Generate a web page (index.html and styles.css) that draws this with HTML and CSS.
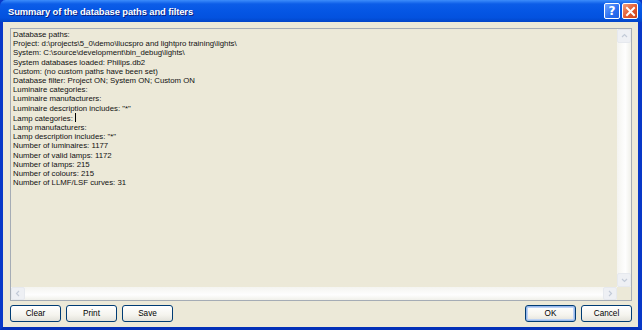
FILE: index.html
```html
<!DOCTYPE html>
<html lang="en">
<head>
    <meta charset="UTF-8">
    <title>Summary of the database paths and filters</title>
    <link rel="stylesheet" href="styles.css">
</head>
<body>
    <div class="window">
        <div class="titlebar">
            <span class="title">Summary of the database paths and filters</span>
            <div class="title-buttons">
                <span class="tb-btn help">?</span>
                <span class="tb-btn close">
                    <svg width="11" height="11" viewBox="0 0 11 11"><path d="M2 2 L9 9 M9 2 L2 9" stroke="#fff" stroke-width="2" stroke-linecap="square"/></svg>
                </span>
            </div>
        </div>
        <div class="client">
            <div class="log">
                <div class="log-main">
                    <div class="log-text">
                        <div>Database paths:</div>
                        <div>Project: d:\projects\5_0\demo\llucspro and lightpro training\lights\</div>
                        <div>System: C:\source\development\bin_debug\lights\</div>
                        <div>System databases loaded: Philips.db2</div>
                        <div>Custom: (no custom paths have been set)</div>
                        <div>Database filter: Project ON; System ON; Custom ON</div>
                        <div>Luminaire categories:</div>
                        <div>Luminaire manufacturers:</div>
                        <div>Luminaire description includes: "*"</div>
                        <div>Lamp categories: <span class="caret"></span></div>
                        <div>Lamp manufacturers:</div>
                        <div>Lamp description includes: "*"</div>
                        <div>Number of luminaires: 1177</div>
                        <div>Number of valid lamps: 1172</div>
                        <div>Number of lamps: 215</div>
                        <div>Number of colours: 215</div>
                        <div>Number of LLMF/LSF curves: 31</div>
                    </div>
                    <div class="hscroll">
                        <span class="arrow">
                            <svg width="6" height="7" viewBox="0 0 6 7"><path d="M4 1 L1.5 3.5 L4 6" fill="none" stroke="#c3cbd8" stroke-width="1.2"/></svg>
                        </span>
                        <span class="track"></span>
                        <span class="arrow">
                            <svg width="6" height="7" viewBox="0 0 6 7"><path d="M2 1 L4.5 3.5 L2 6" fill="none" stroke="#c3cbd8" stroke-width="1.2"/></svg>
                        </span>
                    </div>
                </div>
                <div class="vscroll">
                    <span class="arrow">
                        <svg width="7" height="6" viewBox="0 0 7 6"><path d="M1 4 L3.5 1.5 L6 4" fill="none" stroke="#c3cbd8" stroke-width="1.2"/></svg>
                    </span>
                    <span class="track"></span>
                    <span class="arrow">
                        <svg width="7" height="6" viewBox="0 0 7 6"><path d="M1 2 L3.5 4.5 L6 2" fill="none" stroke="#c3cbd8" stroke-width="1.2"/></svg>
                    </span>
                    <span class="corner"></span>
                </div>
            </div>
            <div class="buttons">
                <button class="btn">Clear</button>
                <button class="btn">Print</button>
                <button class="btn">Save</button>
                <span class="spacer"></span>
                <button class="btn default">OK</button>
                <button class="btn">Cancel</button>
            </div>
        </div>
    </div>
</body>
</html>
```

FILE: styles.css
```css
html, body {
    margin: 0;
    padding: 0;
}
body {
    width: 642px;
    height: 330px;
    overflow: hidden;
    font-family: Tahoma, "DejaVu Sans", sans-serif;
}
.window {
    width: 642px;
    height: 330px;
    box-sizing: border-box;
    display: flex;
    flex-direction: column;
    background: #0a54e2;
    border-left: 3px solid #0838c8;
    border-right: 4px solid #0838c8;
    border-bottom: 3px solid #0330b8;
}
.titlebar {
    height: 22px;
    margin: 0 -4px 0 -3px;
    padding: 0 4px 0 8px;
    display: flex;
    align-items: center;
    justify-content: space-between;
    background: linear-gradient(#3d8dfb 0, #0c5de8 18%, #0556e4 50%, #0352df 80%, #0245c8 100%);
    border-radius: 6px 6px 0 0;
}
.title {
    color: #fff;
    font-family: "Liberation Sans", Arial, sans-serif;
    font-weight: bold;
    font-size: 9.4px;
    letter-spacing: -0.1px;
    text-shadow: 1px 1px 0 #0a1f80;
}
.title-buttons {
    display: flex;
    gap: 2px;
}
.tb-btn {
    width: 16px;
    height: 16px;
    box-sizing: border-box;
    border: 1px solid #fff;
    border-radius: 2px;
    display: flex;
    align-items: center;
    justify-content: center;
    color: #fff;
    font-family: "DejaVu Sans", sans-serif;
    font-weight: bold;
    font-size: 12px;
}
.help {
    background: linear-gradient(135deg, #6fa3ff, #2a6ef0 60%, #1d5fe0);
}
.close {
    background: linear-gradient(135deg, #f0a080, #e2582e 55%, #cc4218);
}
.client {
    flex: 1;
    background: #ece9d8;
    display: flex;
    flex-direction: column;
    padding: 6px 6px 5px 7px;
}
.log {
    flex: 1;
    display: flex;
    border: 1px solid #a5acb5;
    background: #ece9d8;
}
.log-main {
    flex: 1;
    display: flex;
    flex-direction: column;
}
.log-text {
    flex: 1;
    padding: 1px 2px 0;
    font-family: "Liberation Sans", Arial, sans-serif;
    font-size: 7.8px;
    line-height: 9.2px;
    color: #111;
    white-space: nowrap;
    overflow: hidden;
}
.caret {
    display: inline-block;
    width: 1px;
    height: 9px;
    background: #000;
    vertical-align: -1px;
}
.hscroll {
    height: 13px;
    display: flex;
    background: linear-gradient(#f4f4f0, #fefefe 60%, #f0f0ea);
}
.vscroll {
    width: 14px;
    display: flex;
    flex-direction: column;
    background: linear-gradient(90deg, #f4f4f0, #fefefe 60%, #f0f0ea);
}
.track {
    flex: 1;
}
.arrow {
    display: flex;
    align-items: center;
    justify-content: center;
    box-sizing: border-box;
    border: 1px solid #e6e9ee;
    border-radius: 2px;
    background: #eef0f4;
}
.hscroll .arrow {
    width: 14px;
    height: 13px;
}
.vscroll .arrow {
    width: 14px;
    height: 14px;
}
.corner {
    height: 13px;
    background: #ece9d8;
}
.buttons {
    display: flex;
    gap: 5px;
    padding-top: 4px;
}
.spacer {
    flex: 1;
}
.btn {
    width: 51px;
    height: 17px;
    padding: 0;
    border: 1px solid #003c74;
    border-radius: 3px;
    background: linear-gradient(#ffffff, #f5f4ee 60%, #e3e2da);
    font-family: "Liberation Sans", Arial, sans-serif;
    font-size: 8.2px;
    color: #000;
}
.btn.default {
    box-shadow: inset 0 0 0 1px #97b8ec, inset 0 0 0 2px #bcd2f4;
}
```
